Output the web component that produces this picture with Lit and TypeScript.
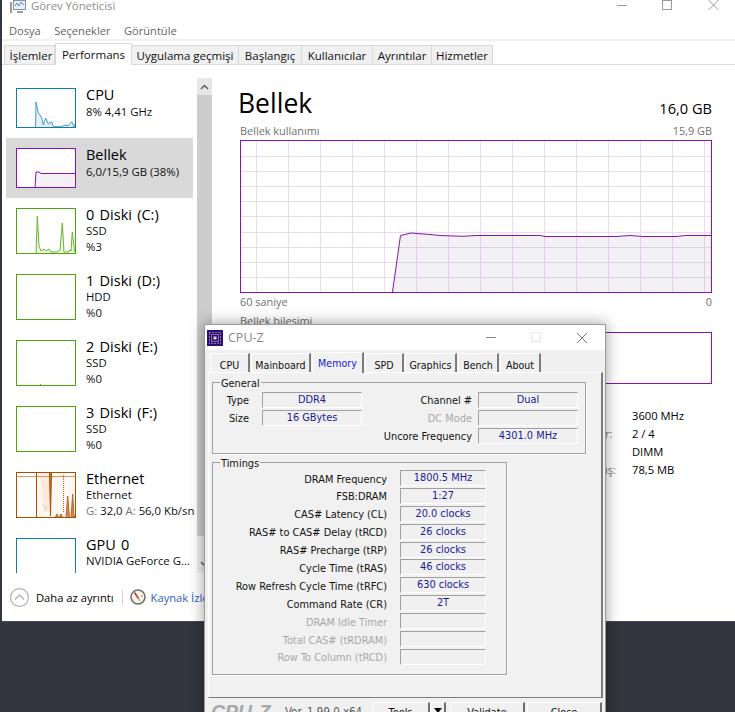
import { LitElement, html, css, svg } from 'lit';
import { customElement } from 'lit/decorators.js';

interface Perf {
  name: string;
  l2: string;
  l3?: string;
  color: string;
  h: number;
  graph?: ReturnType<typeof svg>;
}

const PERFS: Perf[] = [
  {
    name: 'CPU', l2: '8%  4,41 GHz', color: '#1179ac', h: 40,
    graph: svg`<path d="M19.5 41L20 14L22.3 25L24 27L25.7 30L27.3 37L29.7 30L32.3 36L35.7 33.7L37.3 38.7H45.7L49 37L52 38L55.7 33.7L58 38.7L59.3 36L61 41Z" fill="#e3eff6" stroke="#4a9ac8"/>`,
  },
  {
    name: 'Bellek', l2: '6,0/15,9 GB (38%)', color: '#8b12ae', h: 40,
    graph: svg`<path d="M19 41L20 24L23 24L25 25.5H61V41Z" fill="#f3f0f5" stroke="#8b12ae"/>`,
  },
  {
    name: '0 Diski (C:)', l2: 'SSD', l3: '%3', color: '#4da60c', h: 46,
    graph: svg`<path d="M20 47L21.3 8L23 38L25 43L28 41L30 43L33 41L35 44H39L41 44L44 42L46.3 15L48 44L52 44L54 42L55 43L56.3 24L58.5 43L60 45V47Z" fill="#eef6e6" stroke="#6ab52f"/>`,
  },
  { name: '1 Diski (D:)', l2: 'HDD', l3: '%0', color: '#4da60c', h: 46 },
  {
    name: '2 Diski (E:)', l2: 'SSD', l3: '%0', color: '#4da60c', h: 46,
    graph: svg`<path d="M24.5 45v-1" stroke="#4da60c"/>`,
  },
  { name: '3 Diski (F:)', l2: 'SSD', l3: '%0', color: '#4da60c', h: 46 },
  {
    name: 'Ethernet', l2: 'Ethernet', l3: 'net', color: '#a74f01', h: 46,
    graph: svg`<rect x="21" y="1" width="39" height="44" fill="#fef7f2"/>
      <path d="M24 1L27 30L29 40L33 40L35 1" fill="#fbe9dc"/>
      <path d="M1 4.5H60" stroke="#d99b6c" fill="none"/>
      <path d="M20.5 1V46" stroke="#a74f01" fill="none"/>
      <path d="M27 32L29 38L31 34" stroke="#e8b08c" stroke-dasharray="1 1" fill="none"/>
      <path d="M47.5 3V40" stroke="#b9632b" stroke-dasharray="1 1" fill="none"/>
      <path d="M33.5 1L34.5 44L35.5 1" stroke="#a74f01" stroke-width="1" fill="#c47a40"/>
      <path d="M36 46L39 46L41 42L43 46L45 42L47 46L50 46L51.7 24L53.5 46L55 46L56.7 22L58 46L60 41V47Z" stroke="#b9632b" fill="#d08a57"/>`,
  },
  { name: 'GPU 0', l2: 'NVIDIA GeForce G...', l3: '0%  (44 °C)', color: '#1179ac', h: 46 },
];

const GENERAL_LEFT = [['Type', 'DDR4'], ['Size', '16 GBytes']];
const GENERAL_RIGHT: [string, string, boolean][] = [
  ['Channel #', 'Dual', false],
  ['DC Mode', '', true],
  ['Uncore Frequency', '4301.0 MHz', false],
];
const TIMINGS: [string, string, boolean][] = [
  ['DRAM Frequency', '1800.5 MHz', false],
  ['FSB:DRAM', '1:27', false],
  ['CAS# Latency (CL)', '20.0 clocks', false],
  ['RAS# to CAS# Delay (tRCD)', '26 clocks', false],
  ['RAS# Precharge (tRP)', '26 clocks', false],
  ['Cycle Time (tRAS)', '46 clocks', false],
  ['Row Refresh Cycle Time (tRFC)', '630 clocks', false],
  ['Command Rate (CR)', '2T', false],
  ['DRAM Idle Timer', '', true],
  ['Total CAS# (tRDRAM)', '', true],
  ['Row To Column (tRCD)', '', true],
];

const V_LINES = Array.from({ length: 15 }, (_, i) => 16.5 + i * 32);
const H_LINES = [16.5, 31.5, 46.5, 61.5, 76.5, 92.5, 107.5, 122.5, 137.5];
const USAGE = '152.5,152 160.5,95.5 171,93 190,94.5 200,95.5 223,96.3 236,95.5 300,95.5 305,96.5 376,96.5 390,95.5 403,96.5 436,96.5 446,95.5 472,95.5';

@customElement('app-root')
export class AppRoot extends LitElement {
  static styles = css`
    :host {
      display: block;
      position: relative;
      width: 735px;
      height: 712px;
      overflow: hidden;
      background: #33363c;
      font-family: 'Open Sans', 'Noto Sans', sans-serif;
      color: #000;
    }

    /* Task manager */
    .tm {
      position: absolute;
      left: 2px;
      top: 0;
      width: 733px;
      height: 622px;
      background: #fff;
      display: flex;
      flex-direction: column;
      border-bottom: 1px solid #45484e;
      box-sizing: border-box;
    }
    .titlebar {
      height: 23px;
      display: flex;
      align-items: flex-start;
      padding-left: 8px;
      gap: 5px;
      font-size: 11.3px;
      line-height: 11px;
      color: #8e8e8e;
      position: relative;
      flex: none;
    }
    .caption {
      position: absolute;
      top: 0;
      right: 0;
    }
    .menu {
      height: 16px;
      padding: 0 0 2px 7px;
      display: flex;
      gap: 13.5px;
      font-size: 11.1px;
      color: #666;
      align-items: center;
      flex: none;
      box-sizing: border-box;
    }
    .tabs {
      height: 26px;
      display: flex;
      align-items: flex-end;
      border-top: 2px solid #f1f1f1;
      border-bottom: 1px solid #d9d9d9;
      padding-left: 2px;
      box-sizing: border-box;
      flex: none;
    }
    .tab {
      height: 19px;
      background: #f0f0f0;
      border: 1px solid #d9d9d9;
      border-bottom: 0;
      border-left-width: 0;
      display: flex;
      align-items: center;
      justify-content: center;
      padding-top: 1px;
      font-size: 11.5px;
      box-sizing: border-box;
      color: #111;
    }
    .tab:first-child {
      border-left-width: 1px;
      padding-left: 3px;
    }
    .tab.on {
      height: 22px;
      background: #fff;
      margin-bottom: -1px;
      padding-top: 0;
      padding-bottom: 1px;
      border-left-width: 1px;
      position: relative;
    }
    .body {
      flex: 1;
      display: flex;
      min-height: 0;
    }
    .side {
      width: 210px;
      height: 508px;
      overflow: hidden;
      position: relative;
      flex: none;
    }
    .list {
      padding: 13px 0 0 4px;
      width: 187px;
    }
    .item {
      height: 60px;
      width: 187px;
      display: flex;
      gap: 10px;
      padding: 10px 0 0 10px;
      box-sizing: border-box;
    }
    .item.disk {
      height: 66px;
    }
    .item.sel {
      background: #d9d9d9;
    }
    .thumb {
      flex: none;
      width: 60px;
      box-sizing: border-box;
      border: 1px solid;
      background: #fff;
      display: block;
      overflow: hidden;
    }
    .meta {
      min-width: 0;
      white-space: nowrap;
    }
    .name {
      font-size: 14.5px;
      line-height: 17px;
      margin-top: -2px;
      word-spacing: 1.5px;
    }
    .sub {
      font-size: 11.35px;
      line-height: 15.5px;
      color: #111;
    }
    .sub.first {
      padding-top: 1px;
    }
    .sub .dim {
      color: #767676;
    }
    .scroll {
      position: absolute;
      left: 195px;
      top: 13px;
      width: 15px;
      height: 495px;
      background: #f0f0f0;
    }
    .scroll .up {
      height: 17px;
      background: #e7e7e7;
      display: flex;
      align-items: center;
      justify-content: center;
    }
    .scroll .knob {
      height: 441px;
      background: #cdcdcd;
    }
    .scroll .down {
      height: 37px;
      display: flex;
      align-items: flex-end;
      justify-content: center;
      padding-bottom: 6px;
      box-sizing: border-box;
    }
    .main {
      flex: 1;
      padding: 0 0 0 28px;
      min-width: 0;
    }
    .main-inner {
      width: 472px;
    }
    .head {
      display: flex;
      justify-content: space-between;
      align-items: flex-end;
      height: 58px;
      padding-bottom: 2px;
      box-sizing: border-box;
    }
    .head h1 {
      margin: 0 0 0 -2px;
      font-size: 26.5px;
      font-weight: 400;
      line-height: 36px;
    }
    .head span {
      font-size: 14.6px;
      line-height: 26px;
    }
    .cap {
      display: flex;
      justify-content: space-between;
      font-size: 10.9px;
      color: #707070;
      line-height: 14px;
    }
    .cap.top {
      margin-top: 1px;
      margin-bottom: 2px;
    }
    .cap.bot {
      margin-top: 2px;
    }
    .graph {
      display: block;
    }
    .compo-label {
      font-size: 10.9px;
      color: #707070;
      line-height: 14px;
      margin-top: 5px;
    }
    .compo {
      height: 52px;
      border: 1px solid #8b12ae;
      box-sizing: border-box;
      margin-top: 4px;
    }
    .stats {
      margin: 23px 0 0 365px;
      display: grid;
      grid-template-columns: 27px auto;
      grid-auto-rows: 18px;
      font-size: 11.2px;
      line-height: 18px;
    }
    .stats .k {
      color: #767676;
      font-size: 11px;
    }
    .foot {
      height: 48px;
      display: flex;
      align-items: center;
      padding-left: 8px;
      font-size: 11.2px;
      white-space: nowrap;
      position: absolute;
      left: 0;
      right: 0;
      top: 573px;
      gap: 7px;
    }
    .foot .sep {
      width: 1px;
      height: 15px;
      background: #d0d0d0;
      margin: 0 0 0 1px;
    }
    .foot .res {
      margin-right: -2px;
    }
    .foot a {
      color: #2a60c4;
    }

    /* CPU-Z */
    .cz {
      position: absolute;
      left: 204px;
      top: 324px;
      width: 402px;
      height: 400px;
      background: #f0f0f0;
      border: 1px solid #9a9a9a;
      box-sizing: border-box;
      box-shadow: 0 0 14px rgba(0, 0, 0, 0.4);
      font-family: 'DejaVu Sans', sans-serif;
      font-stretch: condensed;
      font-size: 10.9px;
    }
    .cz-title {
      height: 25px;
      background: #fff;
      display: flex;
      align-items: center;
      gap: 5px;
      padding-left: 2px;
      color: #888;
      font-size: 12.5px;
      font-stretch: normal;
      position: relative;
      font-family: 'Open Sans', sans-serif;
    }
    .cz-caption {
      position: absolute;
      top: 0;
      left: 0;
    }
    .cz-tabs {
      display: flex;
      align-items: flex-end;
      height: 22px;
      padding-left: 5px;
      font-size: 10.6px;
    }
    .cz-tab {
      height: 19px;
      background: #f0f0f0;
      box-sizing: border-box;
      border-top: 1px solid #fff;
      border-left: 1px solid #fff;
      border-right: 2px solid #7c7c7c;
      display: flex;
      align-items: center;
      justify-content: center;
      padding-top: 3px;
      margin-right: 1px;
      color: #111;
    }
    .cz-tab.on {
      height: 21px;
      color: #1a1ad8;
      background: #f1f1f1;
      position: relative;
      margin-bottom: -1px;
      padding-top: 1px;
      padding-bottom: 1px;
      z-index: 1;
    }
    .pane {
      margin: 0 2px 0 3px;
      height: 326px;
      box-sizing: border-box;
      border-top: 1px solid #fff;
      border-left: 1px solid #fff;
      border-right: 2px solid #7c7c7c;
      border-bottom: 1px solid #7c7c7c;
      padding: 9px 0 0 3px;
      background: #f1f1f1;
    }
    fieldset {
      margin: 0;
      padding: 0;
      border: 1px solid #a0a0a0;
      box-shadow: 1px 1px 0 #fff;
      box-sizing: border-box;
      position: relative;
    }
    .legend {
      position: absolute;
      left: 7px;
      top: -6px;
      padding: 0 1px;
      line-height: 13px;
      background: #f1f1f1;
      color: #111;
    }
    .general {
      width: 374px;
      height: 72px;
      display: flex;
      padding-top: 9px;
      box-sizing: border-box;
    }
    .gcol {
      display: grid;
      row-gap: 3px;
      grid-auto-rows: 15px;
      align-content: start;
      align-items: center;
    }
    .gcol.l {
      width: 49px;
      grid-template-columns: 36px 100px;
      column-gap: 13px;
    }
    .gcol.r {
      position: absolute;
      left: 165px;
      grid-template-columns: 94px 100px;
      column-gap: 6px;
    }
    .lbl {
      text-align: right;
      color: #111;
      white-space: nowrap;
      padding-top: 2px;
    }
    .lbl.off {
      color: #a8a8a8;
    }
    .val {
      box-sizing: border-box;
      height: 16px;
      border: 1px solid #a0a0a0;
      border-right-color: #fff;
      border-bottom-color: #fff;
      color: #1a1a9a;
      text-align: center;
      line-height: 14px;
      background: #f0f0f0;
    }
    .timings {
      margin-top: 8px;
      width: 295px;
      height: 213px;
      padding: 7px 0 0 0;
      display: grid;
      grid-template-columns: 174px 86px;
      column-gap: 13px;
      grid-auto-rows: 16px;
      row-gap: 1.9px;
      align-content: start;
      align-items: center;
    }
    .cz-foot {
      height: 26px;
      position: relative;
    }
    .brand {
      position: absolute;
      left: 6px;
      top: 3px;
      font: italic 700 19.5px 'Liberation Sans', Arial, sans-serif;
      color: #a8a8a8;
    }
    .ver {
      position: absolute;
      left: 80px;
      top: 7px;
      color: #555;
      font-size: 11.4px;
    }
    .btn {
      position: absolute;
      top: 4px;
      height: 24px;
      box-sizing: border-box;
      background: #f0f0f0;
      border: 1px solid #fff;
      border-right: 2px solid #6e6e6e;
      border-bottom: 2px solid #6e6e6e;
      display: flex;
      justify-content: center;
      padding-top: 3px;
      color: #111;
    }
    .btn.tools { left: 167px; width: 58px; }
    .btn.more { left: 225px; width: 16px; }
    .btn.validate { left: 245px; width: 75px; }
    .btn.close { left: 322px; width: 75px; }
    .arrow {
      width: 0;
      height: 0;
      margin-top: 2px;
      border-left: 4px solid transparent;
      border-right: 4px solid transparent;
      border-top: 5px solid #000;
    }
  `;

  private renderThumb(p: Perf) {
    return html`<svg class="thumb" style="border-color:${p.color};height:${p.h}px"
      viewBox="1 1 58 ${p.h - 2}" width="60" height=${p.h}>${p.graph}</svg>`;
  }

  private renderPerf(p: Perf, i: number) {
    const tall = !!p.l3;
    return html`<div class="item ${i === 1 ? 'sel' : ''} ${tall ? 'disk' : ''}">
      ${this.renderThumb(p)}
      <div class="meta">
        <div class="name">${p.name}</div>
        <div class="sub ${tall ? '' : 'first'}">${p.l2}</div>
        ${p.l3 === 'net'
          ? html`<div class="sub"><span class="dim">G:</span> 32,0 <span class="dim">A:</span> 56,0 Kb/sn</div>`
          : p.l3 ? html`<div class="sub">${p.l3}</div>` : ''}
      </div>
    </div>`;
  }

  private renderMainGraph() {
    return html`<svg class="graph" width="472" height="153" viewBox="0 0 472 153">
      ${V_LINES.map((x) => svg`<path d="M${x} 0V152" stroke="#eed9f3"/>`)}
      ${H_LINES.map((y) => svg`<path d="M0 ${y}H471" stroke="#eed9f3"/>`)}
      <polygon points="${USAGE} 472,152" fill="#4a3a5a" fill-opacity="0.07"/>
      <polyline points=${USAGE} fill="none" stroke="#8b12ae" stroke-width="1"/>
      <rect x="0.5" y="0.5" width="471" height="152" fill="none" stroke="#8b12ae"/>
    </svg>`;
  }

  render() {
    return html`
      <div class="tm">
        <div class="titlebar">
          <svg width="16" height="14" viewBox="0 0 16 14">
            <rect x="3.5" y="0.5" width="12" height="9" fill="#e8f0f6" stroke="#8a9099"/>
            <path d="M5 6L7 3L9 6L11 2L14 5" fill="none" stroke="#4a90c4"/>
            <path d="M1 2V13M7 12H13" stroke="#9a9a9a" stroke-width="2"/>
          </svg>
          <span>Görev Yöneticisi</span>
          <svg class="caption" width="120" height="20" viewBox="0 0 120 20">
            <path d="M2 5.5H12" stroke="#999"/>
            <rect x="47.5" y="0.5" width="9" height="9" fill="none" stroke="#999"/>
            <path d="M93.5 0L103.5 10M103.5 0L93.5 10" stroke="#999"/>
          </svg>
        </div>
        <div class="menu"><span>Dosya</span><span>Seçenekler</span><span>Görüntüle</span></div>
        <div class="tabs">
          ${[['İşlemler', 51], ['Performans', 77], ['Uygulama geçmişi', 107], ['Başlangıç', 63], ['Kullanıcılar', 71], ['Ayrıntılar', 59], ['Hizmetler', 61]].map(
            ([t, w]) => html`<div class="tab ${t === 'Performans' ? 'on' : ''}" style="width:${w}px">${t}</div>`
          )}
        </div>
        <div class="body">
          <div class="side">
            <div class="list">${PERFS.map((p, i) => this.renderPerf(p, i))}</div>
            <div class="scroll">
              <div class="up">
                <svg width="9" height="6" viewBox="0 0 9 6"><path d="M1 5L4.5 1.5L8 5" fill="none" stroke="#555" stroke-width="1.4"/></svg>
              </div>
              <div class="knob"></div>
              <div class="down">
                <svg width="9" height="6" viewBox="0 0 9 6"><path d="M1 1L4.5 4.5L8 1" fill="none" stroke="#555" stroke-width="1.4"/></svg>
              </div>
            </div>
          </div>
          <div class="main">
            <div class="main-inner">
              <div class="head"><h1>Bellek</h1><span>16,0 GB</span></div>
              <div class="cap top"><span>Bellek kullanımı</span><span>15,9 GB</span></div>
              ${this.renderMainGraph()}
              <div class="cap bot"><span>60 saniye</span><span>0</span></div>
              <div class="compo-label">Bellek bileşimi</div>
              <div class="compo"></div>
              <div class="stats">
                <span class="k"></span><span>3600 MHz</span>
                <span class="k">r:</span><span>2 / 4</span>
                <span class="k"></span><span>DIMM</span>
                <span class="k">ış:</span><span>78,5 MB</span>
              </div>
            </div>
          </div>
        </div>
        <div class="foot">
          <svg width="19" height="19" viewBox="0 0 19 19">
            <circle cx="9.5" cy="9.5" r="8.9" fill="none" stroke="#aaa" stroke-width="1.1"/>
            <path d="M5 11.5L9.5 7L14 11.5" fill="none" stroke="#aaa" stroke-width="1.2"/>
          </svg>
          <span>Daha az ayrıntı</span>
          <span class="sep"></span>
          <svg class="res" width="16" height="16" viewBox="0 0 16 16">
            <circle cx="8" cy="8" r="7" fill="#f7f4ec" stroke="#6f6f6f" stroke-width="1.6"/>
            <path d="M4.5 3.5L8.5 9.5" stroke="#c23a2a" stroke-width="1.6"/>
            <path d="M8.5 9.5L10 12" stroke="#777"/>
            <circle cx="12" cy="7" r="0.9" fill="#e0962a"/>
          </svg>
          <a>Kaynak İzleyicisini Aç</a>
        </div>
      </div>

      <div class="cz">
        <div class="cz-title">
          <svg width="16" height="16" viewBox="0 0 16 16">
            <rect width="16" height="16" fill="#2f0b74"/>
            <rect x="4.5" y="4.5" width="7" height="7" fill="none" stroke="#ddd" stroke-dasharray="1 1"/>
            <rect x="2.5" y="2.5" width="11" height="11" fill="none" stroke="#ddd" stroke-dasharray="1 2"/>
            <rect x="6.5" y="6.5" width="3" height="3" fill="#ddd"/>
          </svg>
          <span>CPU-Z</span>
          <svg class="cz-caption" width="400" height="25" viewBox="0 0 400 25">
            <path d="M281 12.5H291" stroke="#888"/>
            <rect x="326.5" y="7.5" width="9" height="9" fill="none" stroke="#e6e6e6"/>
            <path d="M372 8L382 18M382 8L372 18" stroke="#777"/>
          </svg>
        </div>
        <div class="cz-tabs">
          ${[['CPU', 40], ['Mainboard', 60], ['Memory', 52], ['SPD', 39], ['Graphics', 52], ['Bench', 41], ['About', 41]].map(
            ([t, w]) => html`<div class="cz-tab ${t === 'Memory' ? 'on' : ''}" style="width:${w}px">${t}</div>`
          )}
        </div>
        <div class="pane">
          <fieldset class="general">
            <span class="legend">General</span>
            <div class="gcol l">
              ${GENERAL_LEFT.map(([k, v]) => html`<span class="lbl">${k}</span><span class="val">${v}</span>`)}
            </div>
            <div class="gcol r">
              ${GENERAL_RIGHT.map(([k, v, off]) => html`<span class="lbl ${off ? 'off' : ''}">${k}</span><span class="val">${v}</span>`)}
            </div>
          </fieldset>
          <fieldset class="timings">
            <span class="legend">Timings</span>
            ${TIMINGS.map(([k, v, off]) => html`<span class="lbl ${off ? 'off' : ''}">${k}</span><span class="val">${v}</span>`)}
          </fieldset>
        </div>
        <div class="cz-foot">
          <span class="brand">CPU-Z</span>
          <span class="ver">Ver. 1.99.0.x64</span>
          <div class="btn tools">Tools</div>
          <div class="btn more"><span class="arrow"></span></div>
          <div class="btn validate">Validate</div>
          <div class="btn close">Close</div>
        </div>
      </div>
    `;
  }
}

declare global {
  interface HTMLElementTagNameMap {
    'app-root': AppRoot;
  }
}
